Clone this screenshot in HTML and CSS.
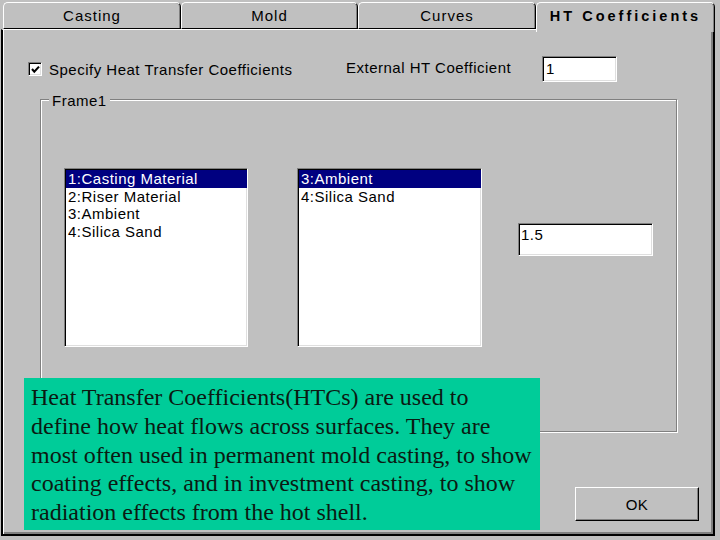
FILE: index.html
```html
<!DOCTYPE html>
<html>
<head>
<meta charset="utf-8">
<title>HT Coefficients</title>
<link rel="stylesheet" href="styles.css">
</head>
<body>
<div class="dialog">
  <div class="tabs">
    <div class="tab t1">Casting</div>
    <div class="tab t2">Mold</div>
    <div class="tab t3">Curves</div>
    <div class="tab t4 active">HT Coefficients</div>
  </div>
  <div class="panel">
    <div class="top-row">
      <span class="check"><svg width="9" height="9" viewBox="0 0 9 9"><polyline points="1,4 3.3,6.6 8,1.6" fill="none" stroke="#000" stroke-width="2.1"/></svg></span>
      <span class="check-label">Specify Heat Transfer Coefficients</span>
      <span class="ext-label">External HT Coefficient</span>
      <div class="field ext-field">1</div>
    </div>
    <div class="frame">
      <span class="frame-label">Frame1</span>
      <div class="listbox lb1">
        <div class="item sel">1:Casting Material</div>
        <div class="item">2:Riser Material</div>
        <div class="item">3:Ambient</div>
        <div class="item">4:Silica Sand</div>
      </div>
      <div class="listbox lb2">
        <div class="item sel">3:Ambient</div>
        <div class="item">4:Silica Sand</div>
      </div>
      <div class="field htc-field">1.5</div>
    </div>
    <button class="ok">OK</button>
  </div>
  <div class="note">Heat Transfer Coefficients(HTCs) are used to<br>define how heat flows across surfaces. They are<br>most often used in permanent mold casting, to show<br>coating effects, and in investment casting, to show<br>radiation effects from the hot shell.</div>
</div>
</body>
</html>
```
FILE: styles.css
```css
* { box-sizing: border-box; }

body {
  margin: 0;
  background: #c0c0c0;
  font-family: "Liberation Sans", Arial, sans-serif;
  font-size: 15px;
  letter-spacing: 0.5px;
  color: #000;
}

.dialog {
  position: relative;
  width: 720px;
  height: 540px;
  padding-top: 2px;
  overflow: hidden;
}

.tabs {
  display: flex;
  margin-left: 3px;
  height: 27px;
}

.tab {
  height: 27px;
  border: 1px solid;
  border-color: #fff #000 #000 #fff;
  border-radius: 5px 5px 0 0;
  box-shadow: inset -1px 0 0 #808080;
  text-align: center;
  line-height: 25px;
  letter-spacing: 1px;
  white-space: nowrap;
}

.t1 { width: 178px; }
.t2 { width: 177px; }
.t3 { width: 178px; }
.t4 { width: 179px; }

.tab.active {
  position: relative;
  z-index: 1;
  height: 30px;
  border-bottom: none;
  background: #c0c0c0;
  padding-top: 1px;
  font-weight: bold;
  font-size: 14.5px;
  letter-spacing: 3px;
}

.panel {
  margin-left: 1px;
  width: 714px;
  height: 507px;
  border-top: 1px solid #fff;
  border-left: 2px solid #000;
  border-right: 2px solid #000;
  border-bottom: 2px solid #000;
  box-shadow: inset 1px 0 0 #fff, inset -2px -2px 0 #808080;
  display: flex;
  flex-direction: column;
  align-items: flex-start;
}

.top-row {
  display: flex;
  align-items: center;
  height: 26px;
  margin-top: 26px;
  margin-left: 25px;
}

.check {
  width: 14px;
  height: 14px;
  background: #fff;
  border: 1px solid;
  border-color: #808080 #fff #fff #808080;
  box-shadow: inset 1px 1px 0 #000, inset -1px -1px 0 #dfdfdf;
  display: flex;
  align-items: center;
  justify-content: center;
}

.check svg { display: block; }

.check-label {
  margin-left: 7px;
  width: 297px;
  white-space: nowrap;
}

.ext-label {
  width: 196px;
  margin-bottom: 4px;
  white-space: nowrap;
}

.field {
  background: #fff;
  border: 1px solid;
  border-color: #808080 #fff #fff #808080;
  box-shadow: inset 1px 1px 0 #000, inset -1px -1px 0 #dfdfdf;
}

.ext-field {
  width: 75px;
  height: 26px;
  padding: 0 3px;
  line-height: 24px;
}

.frame {
  position: relative;
  margin-top: 17px;
  margin-left: 37px;
  width: 637px;
  height: 333px;
  border: 1px solid #808080;
  box-shadow: 1px 1px 0 #fff, inset 1px 1px 0 #fff;
  display: flex;
  align-items: flex-start;
  padding: 68px 0 0 23px;
}

.frame-label {
  position: absolute;
  left: 8px;
  top: -8px;
  padding: 0 3px;
  background: #c0c0c0;
  line-height: 17px;
}

.listbox {
  height: 179px;
  background: #fff;
  border: 1px solid;
  border-color: #808080 #fff #fff #808080;
  box-shadow: inset 1px 1px 0 #000, inset -1px -1px 0 #dfdfdf;
  padding: 1px 0 0 1px;
}

.lb1 { width: 184px; }
.lb2 { width: 185px; margin-left: 49px; }

.item {
  height: 17.6px;
  line-height: 17.6px;
  padding-left: 2px;
  white-space: nowrap;
}

.item.sel {
  background: #000080;
  color: #fff;
}

.htc-field {
  width: 135px;
  height: 33px;
  margin-left: 36px;
  margin-top: 55px;
  padding: 2px 2px 0;
  line-height: 18px;
}

.ok {
  align-self: flex-end;
  margin: 55px 14px 0 0;
  width: 124px;
  height: 34px;
  padding: 0;
  background: #c0c0c0;
  border: 1px solid;
  border-color: #fff #000 #000 #fff;
  box-shadow: inset -1px -1px 0 #808080;
  font: inherit;
  letter-spacing: 0.5px;
  color: #000;
}

.note {
  position: absolute;
  left: 24px;
  top: 378px;
  width: 516px;
  height: 152px;
  padding: 5px 7px;
  background: #00cc99;
  font-family: "Liberation Serif", "Times New Roman", serif;
  font-size: 24px;
  line-height: 28.75px;
  letter-spacing: 0;
  color: #0b1a12;
  white-space: nowrap;
}
```
